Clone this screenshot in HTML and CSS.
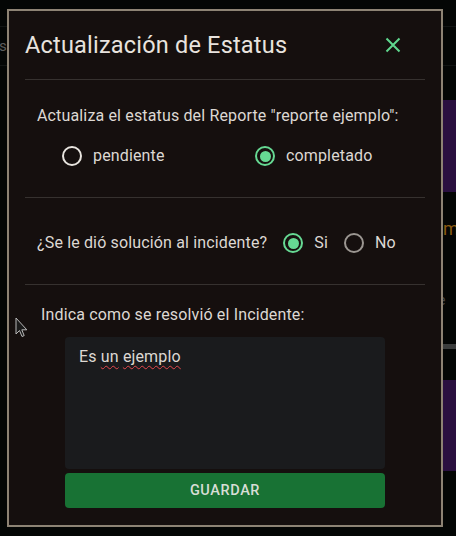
FILE: index.html
```html
<!DOCTYPE html>
<html lang="es">
<head>
<meta charset="utf-8">
<title>Actualización de Estatus</title>
<link rel="stylesheet" href="styles.css">
</head>
<body>
<div class="bg">
  <div class="bg-top"></div>
  <div class="bg-row"><span class="bg-sc">sc</span></div>
  <div class="bg-gap1"></div>
  <div class="bg-card"></div>
  <div class="bg-m">m</div>
  <div class="bg-e">e</div>
  <div class="bg-bar"></div>
  <div class="bg-card bg-card2"></div>
</div>

<div class="dialog">
  <div class="dlg-head">
    <h2 class="dlg-title">Actualización de Estatus</h2>
    <button class="close" aria-label="Cerrar">
      <svg width="24" height="24" viewBox="0 0 24 24"><path d="M5.5 5.5 L18.5 18.5 M18.5 5.5 L5.5 18.5" stroke="#5fd68e" stroke-width="2" fill="none"/></svg>
    </button>
  </div>
  <div class="divider"></div>
  <div class="sec1">
    <p class="txt">Actualiza el estatus del Reporte "reporte ejemplo":</p>
    <div class="radios1">
      <label class="radio"><span class="ring white"></span><span>pendiente</span></label>
      <label class="radio"><span class="ring on"><span class="dot"></span></span><span>completado</span></label>
    </div>
  </div>
  <div class="divider"></div>
  <div class="sec2">
    <span class="txt">¿Se le dió solución al incidente?</span>
    <label class="radio r-si"><span class="ring on"><span class="dot"></span></span><span>Si</span></label>
    <label class="radio r-no"><span class="ring gray"></span><span>No</span></label>
  </div>
  <div class="divider"></div>
  <div class="sec3">
    <p class="txt lbl">Indica como se resolvió el Incidente:</p>
    <div class="area">Es <span class="sp">un</span> <span class="sp">ejemplo</span></div>
    <button class="save">GUARDAR</button>
  </div>
</div>

<svg class="cursor" width="14" height="22" viewBox="0 0 14 22"><path d="M1 1 L1 17 L4.5 13.5 L7 19.5 L9.2 18.6 L6.8 12.8 L11.8 12.8 Z" fill="#1b1b1b" stroke="#b8b8b8" stroke-width="1" stroke-linejoin="round"/></svg>
</body>
</html>
```

FILE: styles.css
```css
* { box-sizing: border-box; }
html, body { margin: 0; padding: 0; }
body {
  width: 456px;
  height: 536px;
  overflow: hidden;
  position: relative;
  background: #040605;
  font-family: Roboto, "Noto Sans", sans-serif;
  color: #ddd8d3;
}

/* background page */
.bg { display: flex; flex-direction: column; }
.bg-top { height: 27px; border-bottom: 1px solid #121514; }
.bg-row { height: 39px; border-bottom: 1px solid #121514; display: flex; align-items: center; }
.bg-sc { margin-left: -1px; font-size: 15px; color: #5c5c5c; }
.bg-gap1 { height: 34px; }
.bg-card { margin-left: 443px; height: 92px; background: #2a1040; }
.bg-m { margin-left: 443px; margin-top: 25px; height: 24px; font-size: 18px; line-height: 24px; color: #8a5c12; }
.bg-e { margin-left: 438px; margin-top: 52px; height: 14px; font-size: 14px; line-height: 14px; color: #4a4a4a; }
.bg-bar { margin-left: 443px; margin-top: 37px; height: 5px; background: #3b3d3d; }
.bg-card2 { margin-top: 31px; height: 91px; }

/* dialog */
.dialog {
  position: absolute;
  left: 7px;
  top: 9px;
  width: 436px;
  height: 518px;
  border: 2px solid #8d8374;
  background: #150f0e;
}
.dlg-head {
  display: flex;
  align-items: center;
  justify-content: space-between;
  height: 68px;
  padding: 0 36px 0 16px;
}
.dlg-title {
  margin: 0;
  font-size: 23.5px;
  line-height: 32px;
  font-weight: 400;
  letter-spacing: 0.2px;
  color: #e8e3de;
}
.close {
  width: 24px;
  height: 24px;
  padding: 0;
  border: 0;
  background: none;
  display: flex;
}
.divider { height: 1px; background: #36312f; margin: 0 16px; }

.txt { margin: 0; font-size: 16px; line-height: 24px; letter-spacing: 0.15px; color: #ddd8d3; }

.sec1 { padding: 24px 0 20px 28px; }
.radios1 {
  display: grid;
  grid-template-columns: 193px 193px;
  margin-top: 7px;
  padding-left: 25px;
  height: 42px;
  align-items: center;
}
.radio {
  display: flex;
  align-items: center;
  gap: 11px;
  font-size: 16px;
  line-height: 24px;
  letter-spacing: 0.15px;
  color: #ddd8d3;
}
.ring {
  width: 20px;
  height: 20px;
  border-radius: 50%;
  border: 2px solid #e8e4df;
  display: flex;
  align-items: center;
  justify-content: center;
  flex: none;
}
.ring.gray { border-color: #9b9691; }
.ring.on { border-color: #66d993; }
.dot { width: 11px; height: 11px; border-radius: 50%; background: #66d993; }

.sec2 {
  display: flex;
  align-items: center;
  height: 86px;
  padding: 24px 0 20px 28px;
}
.r-si { margin-left: 16px; }
.r-no { margin-left: 16px; }

.sec3 { padding-top: 18px; }
.lbl { padding-left: 32px; }
.area {
  width: 320px;
  height: 132px;
  margin: 10px auto 0;
  padding: 8px 14px;
  background: #1a1b1d;
  border-radius: 4px;
  font-size: 16px;
  line-height: 24px;
  letter-spacing: 0.15px;
  color: #ddd8d3;
}
.sp {
  text-decoration: underline wavy #e5484d;
  text-decoration-thickness: 1px;
  text-underline-offset: 3px;
}
.save {
  display: block;
  width: 320px;
  height: 35px;
  margin: 4px auto 0;
  border: 0;
  border-radius: 4px;
  background: #187234;
  color: #d8ded6;
  font-family: Roboto, "Noto Sans", sans-serif;
  font-size: 14.5px;
  font-weight: 500;
  letter-spacing: 0.6px;
}

.cursor { position: absolute; left: 15px; top: 317px; }
```
